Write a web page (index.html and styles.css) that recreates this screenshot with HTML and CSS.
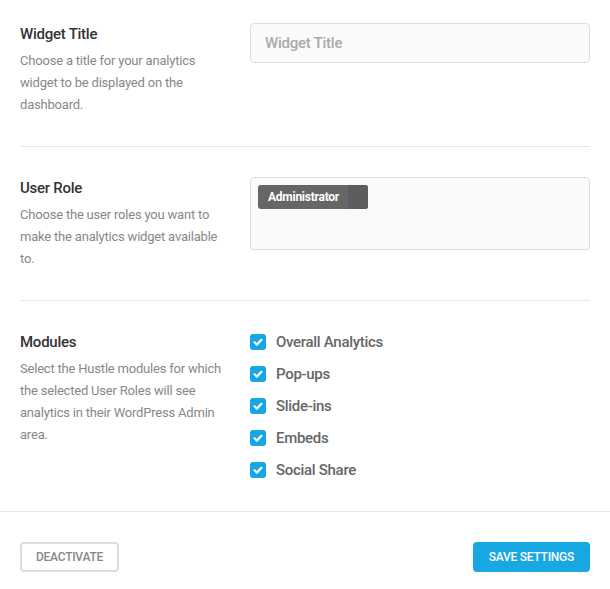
FILE: index.html
```html
<!DOCTYPE html>
<html>
<head>
<meta charset="utf-8">
<link rel="stylesheet" href="styles.css">
</head>
<body>
<div class="box">
  <div class="body">
    <div class="row row-first">
      <div class="col-label">
        <span class="label">Widget Title</span>
        <p class="desc">Choose a title for your analytics widget to be displayed on the dashboard.</p>
      </div>
      <div class="col-field">
        <input class="input" type="text" placeholder="Widget Title">
      </div>
    </div>
    <div class="row">
      <div class="col-label">
        <span class="label">User Role</span>
        <p class="desc">Choose the user roles you want to make the analytics widget available to.</p>
      </div>
      <div class="col-field">
        <div class="multiselect">
          <span class="tag"><span class="tag-text">Administrator</span><span class="tag-remove"></span></span>
        </div>
      </div>
    </div>
    <div class="row row-last">
      <div class="col-label">
        <span class="label">Modules</span>
        <p class="desc">Select the Hustle modules for which the selected User Roles will see analytics in their WordPress Admin area.</p>
      </div>
      <div class="col-field checks">
        <label class="check"><span class="box-icon"><svg viewBox="0 0 16 16" width="16" height="16"><path d="M4.6 8.3 L7 10.6 L11.4 5.8" fill="none" stroke="#fff" stroke-width="2.2" stroke-linecap="round" stroke-linejoin="round"/></svg></span><span class="check-label">Overall Analytics</span></label>
        <label class="check"><span class="box-icon"><svg viewBox="0 0 16 16" width="16" height="16"><path d="M4.6 8.3 L7 10.6 L11.4 5.8" fill="none" stroke="#fff" stroke-width="2.2" stroke-linecap="round" stroke-linejoin="round"/></svg></span><span class="check-label">Pop-ups</span></label>
        <label class="check"><span class="box-icon"><svg viewBox="0 0 16 16" width="16" height="16"><path d="M4.6 8.3 L7 10.6 L11.4 5.8" fill="none" stroke="#fff" stroke-width="2.2" stroke-linecap="round" stroke-linejoin="round"/></svg></span><span class="check-label">Slide-ins</span></label>
        <label class="check"><span class="box-icon"><svg viewBox="0 0 16 16" width="16" height="16"><path d="M4.6 8.3 L7 10.6 L11.4 5.8" fill="none" stroke="#fff" stroke-width="2.2" stroke-linecap="round" stroke-linejoin="round"/></svg></span><span class="check-label">Embeds</span></label>
        <label class="check"><span class="box-icon"><svg viewBox="0 0 16 16" width="16" height="16"><path d="M4.6 8.3 L7 10.6 L11.4 5.8" fill="none" stroke="#fff" stroke-width="2.2" stroke-linecap="round" stroke-linejoin="round"/></svg></span><span class="check-label">Social Share</span></label>
      </div>
    </div>
  </div>
  <div class="footer">
    <button class="btn btn-ghost">Deactivate</button>
    <button class="btn btn-blue">Save Settings</button>
  </div>
</div>
</body>
</html>
```

FILE: styles.css
```css
* { box-sizing: border-box; }
html, body { margin: 0; padding: 0; background: #fff; }
body { font-family: Roboto, "Noto Sans", Arial, sans-serif; color: #333; }

.body { padding: 0 20px; }

.row {
  display: flex;
  padding: 30px 0 30px;
  border-bottom: 1px solid #e6e6e6;
}
.row-first { padding-top: 23px; }
.row-last { border-bottom: none; padding-bottom: 30px; }

.col-label { flex: 0 0 206px; width: 206px; }
.col-field { flex: 1; margin-left: 24px; }

.label {
  display: block;
  font-size: 15px;
  line-height: 22px;
  font-weight: 500;
  letter-spacing: -0.25px;
  color: #333;
  margin-bottom: 5px;
}
.desc {
  margin: 0;
  font-size: 13px;
  line-height: 22px;
  letter-spacing: -0.2px;
  color: #888;
}

.input {
  display: block;
  width: 100%;
  height: 40px;
  border: 1px solid #ddd;
  border-radius: 4px;
  background: #fafafa;
  padding: 0 14px;
  font-family: inherit;
  font-size: 15px;
  font-weight: 500;
  letter-spacing: -0.25px;
  color: #333;
  outline: none;
}
.input::placeholder { color: #aaa; }

.multiselect {
  height: 73px;
  border: 1px solid #ddd;
  border-radius: 4px;
  background: #fafafa;
  padding: 7px;
}
.tag {
  display: inline-flex;
  height: 24px;
  border-radius: 3px;
  overflow: hidden;
  background: #666;
}
.tag-text {
  padding: 0 10px;
  width: 90px;
  font-size: 12px;
  line-height: 24px;
  font-weight: 700;
  letter-spacing: -0.25px;
  color: #fff;
}
.tag-remove {
  width: 20px;
  background: #5d5d5d;
}

.checks { display: flex; flex-direction: column; gap: 10px; }
.check {
  display: flex;
  align-items: center;
  height: 22px;
}
.box-icon {
  width: 16px;
  height: 16px;
  border-radius: 3px;
  background: #17a8e3;
  display: flex;
}
.check-label {
  margin-left: 10px;
  font-size: 15px;
  line-height: 22px;
  font-weight: 500;
  letter-spacing: -0.3px;
  color: #666;
}

.footer {
  display: flex;
  justify-content: space-between;
  border-top: 1px solid #e6e6e6;
  padding: 30px 20px;
}
.btn {
  height: 30px;
  border-radius: 4px;
  padding: 0 14px;
  font-family: inherit;
  font-size: 12px;
  font-weight: 500;
  letter-spacing: -0.25px;
  text-transform: uppercase;
  cursor: pointer;
}
.btn-ghost {
  border: 2px solid #ddd;
  background: #fff;
  color: #888;
}
.btn-blue {
  border: 2px solid #17a8e3;
  background: #17a8e3;
  color: #fff;
}
```
